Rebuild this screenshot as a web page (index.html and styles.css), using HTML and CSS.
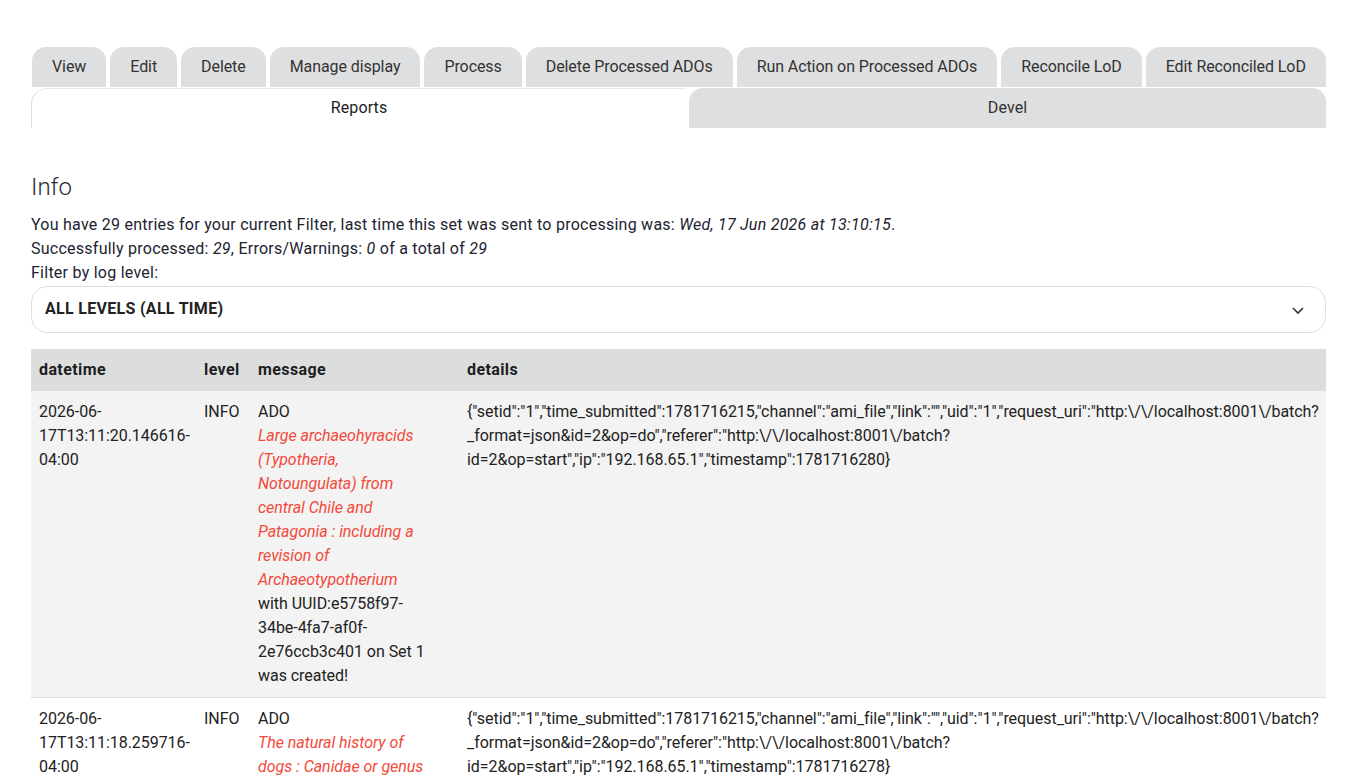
FILE: index.html
```html
<!DOCTYPE html>
<html lang="en">
<head>
<meta charset="utf-8">
<title>Reports</title>
<link rel="stylesheet" href="styles.css">
</head>
<body>
<div class="page">
  <nav class="tabs">
    <ul class="tabs-primary">
      <li class="tab">View</li>
      <li class="tab">Edit</li>
      <li class="tab">Delete</li>
      <li class="tab">Manage display</li>
      <li class="tab">Process</li>
      <li class="tab">Delete Processed ADOs</li>
      <li class="tab">Run Action on Processed ADOs</li>
      <li class="tab">Reconcile LoD</li>
      <li class="tab">Edit Reconciled LoD</li>
    </ul>
    <ul class="tabs-secondary">
      <li class="tab tab-wide tab-active">Reports</li>
      <li class="tab tab-wide">Devel</li>
    </ul>
  </nav>

  <section class="info">
    <h2 class="info-title">Info</h2>
    <p class="info-line">You have 29 entries for your current Filter, last time this set was sent to processing was: <em>Wed, 17 Jun 2026 at 13:10:15</em>.</p>
    <p class="info-line">Successfully processed: <em>29</em>, Errors/Warnings: <em>0</em> of a total of <em>29</em></p>
    <label class="info-line" for="lvl">Filter by log level:</label>
    <div class="select">
      <span class="select-value" id="lvl">ALL LEVELS (ALL TIME)</span>
      <svg class="select-caret" width="14" height="10" viewBox="0 0 14 10"><path d="M2 3 L7 8 L12 3" fill="none" stroke="#333" stroke-width="1.6"/></svg>
    </div>
  </section>

  <table class="log">
    <colgroup>
      <col class="c-dt"><col class="c-lvl"><col class="c-msg"><col class="c-det">
    </colgroup>
    <thead>
      <tr><th>datetime</th><th>level</th><th>message</th><th>details</th></tr>
    </thead>
    <tbody>
      <tr class="odd">
        <td>2026-06-<br>17T13:11:20.146616-<br>04:00</td>
        <td>INFO</td>
        <td>ADO<br><em class="title">Large archaeohyracids<br>(Typotheria,<br>Notoungulata) from<br>central Chile and<br>Patagonia : including a<br>revision of<br>Archaeotypotherium</em><br>with UUID:e5758f97-<br>34be-4fa7-af0f-<br>2e76ccb3c401 on Set 1<br>was created!</td>
        <td>{"setid":"1","time_submitted":1781716215,"channel":"ami_file","link":"","uid":"1","request_uri":"http:\/\/localhost:8001\/batch?<br>_format=json&amp;id=2&amp;op=do","referer":"http:\/\/localhost:8001\/batch?<br>id=2&amp;op=start","ip":"192.168.65.1","timestamp":1781716280}</td>
      </tr>
      <tr class="even">
        <td>2026-06-<br>17T13:11:18.259716-<br>04:00</td>
        <td>INFO</td>
        <td>ADO<br><em class="title">The natural history of<br>dogs : Canidae or genus<br>Canis of authors</em><br>with UUID:1c2e4f9a-<br>7b3d-4e21-9c0a-<br>5d8e2f6b1a33 on Set 1<br>was created!</td>
        <td>{"setid":"1","time_submitted":1781716215,"channel":"ami_file","link":"","uid":"1","request_uri":"http:\/\/localhost:8001\/batch?<br>_format=json&amp;id=2&amp;op=do","referer":"http:\/\/localhost:8001\/batch?<br>id=2&amp;op=start","ip":"192.168.65.1","timestamp":1781716278}</td>
      </tr>
    </tbody>
  </table>
</div>
</body>
</html>
```

FILE: styles.css
```css
* { box-sizing: border-box; }
html, body { margin: 0; padding: 0; background: #fff; }
body {
  font-family: Roboto, "Liberation Sans", sans-serif;
  font-size: 16px;
  line-height: 24px;
  color: #222330;
}
.page { padding: 47px 46px 0 31px; }

.tabs ul { list-style: none; margin: 0; padding: 0; display: flex; }
.tabs-primary { gap: 4px; padding-left: 1px !important; }
.tabs-secondary { gap: 3px; margin-top: 1px !important; padding-left: 1px !important; }
.tab {
  height: 40px;
  line-height: 40px;
  padding: 0 20px;
  background: #dedfe0;
  color: #333;
  border-radius: 14px 14px 0 0;
  white-space: nowrap;
  letter-spacing: -0.08px;
}
.tab-wide { flex: 1 1 auto; text-align: center; letter-spacing: 0.1px; }
.tab-active {
  background: #fff;
  border-left: 1px solid #dedfe0;
  border-top: 1px solid #e8e9ea;
  line-height: 37px;
  margin-left: -1px;
  border-radius: 16px 0 0 0;
  color: #222;
}

.info { margin-top: 45px; }
.info-title {
  margin: 0 0 12px;
  font-size: 24px;
  line-height: 28px;
  font-weight: 300;
  color: #2b2b33;
}
.info-line { margin: 0; display: block; letter-spacing: 0.25px; }
.info em { font-style: italic; }

.select {
  margin-top: 1px;
  height: 47px;
  border: 1px solid #dcdfe3;
  border-radius: 16px;
  display: flex;
  align-items: center;
  justify-content: space-between;
  padding: 0 20px 2px 13px;
}
.select-value { font-weight: 700; letter-spacing: 0.3px; color: #222; }
.select-caret { display: block; margin-top: 2px; }

.log {
  margin-top: 16px;
  width: 100%;
  border-collapse: collapse;
  table-layout: fixed;
}
.c-dt { width: 165px; }
.c-lvl { width: 54px; }
.c-msg { width: 209px; }
.log th {
  background: #dcdddd;
  text-align: left;
  font-weight: 700;
  height: 42px;
  padding: 0 8px 1px;
  color: #1d1d22;
  letter-spacing: 0.4px;
}
.log td {
  vertical-align: top;
  padding: 9px 8px;
  color: #222;
  letter-spacing: -0.05px;
}
.log tr.odd td { background: #f3f3f3; }
.log tr.even td { background: #fff; }
.log tbody tr + tr td { border-top: 1px solid #dbe1e8; }
.log .title { color: #f24a3b; font-style: italic; }
```
